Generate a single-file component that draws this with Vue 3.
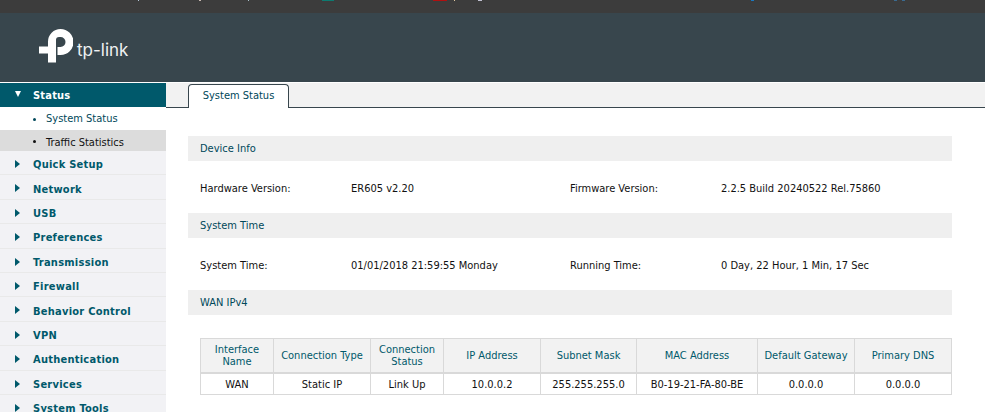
<script setup>
const subs = [
  { name: 'System Status', active: false },
  { name: 'Traffic Statistics', active: true }
]
const menus = ['Quick Setup', 'Network', 'USB', 'Preferences', 'Transmission', 'Firewall', 'Behavior Control', 'VPN', 'Authentication', 'Services', 'System Tools']
const heads = ['Interface Name', 'Connection Type', 'Connection Status', 'IP Address', 'Subnet Mask', 'MAC Address', 'Default Gateway', 'Primary DNS']
const cells = ['WAN', 'Static IP', 'Link Up', '10.0.0.2', '255.255.255.0', 'B0-19-21-FA-80-BE', '0.0.0.0', '0.0.0.0']
const widths = [73, 97, 73, 97, 96, 121, 97, 97]
const flecks = [
  { gap: 138, w: 1, c: '#b5c8d8' }, { gap: 60, w: 2, c: '#c8b8b0' }, { gap: 47, w: 1, c: '#a8c0c8' },
  { gap: 73, w: 12, c: '#0d7a70' }, { gap: 99, w: 14, c: '#b01010' }, { gap: 7, w: 1, c: '#e0c8a0' },
  { gap: 23, w: 4, c: '#c0c0d0' }, { gap: 269, w: 3, c: '#1a78c0' }, { gap: 140, w: 3, c: '#3a6a90' }, { gap: 5, w: 3, c: '#3a6a90' }
]
</script>

<template>
  <div class="page">
    <div class="topbar">
      <i v-for="(f, i) in flecks" :key="i" class="fleck" :style="{ marginLeft: f.gap + 'px', width: f.w + 'px', background: f.c }"></i>
    </div>
    <header class="header">
      <svg class="logo" width="34" height="34" viewBox="0 0 34 34">
        <path fill="#fff" d="M9 17.500V12.500A12.500 12.500 0 0 1 21.500 0A13 13 0 0 1 21.500 26H18.500V18H21.500A5 5 0 0 0 21.500 8H20A3 3 0 0 0 17 11V33.500H9V24.500H0V17.500z"/>
      </svg>
      <span class="brand">tp-link</span>
    </header>
    <div class="main">
      <aside class="side">
        <div class="status"><i class="down"></i>Status</div>
        <div v-for="s in subs" :key="s.name" class="sub" :class="{ on: s.active }"><i class="dot"></i>{{ s.name }}</div>
        <div v-for="m in menus" :key="m" class="menu"><i class="right"></i>{{ m }}</div>
      </aside>
      <main class="content">
        <div class="tabs"><div class="tab">System Status</div></div>
        <div class="body">
          <div class="bar">Device Info</div>
          <div class="info">
            <span>Hardware Version:</span><span>ER605 v2.20</span>
            <span>Firmware Version:</span><span>2.2.5 Build 20240522 Rel.75860</span>
          </div>
          <div class="bar">System Time</div>
          <div class="info">
            <span>System Time:</span><span>01/01/2018 21:59:55 Monday</span>
            <span>Running Time:</span><span>0 Day, 22 Hour, 1 Min, 17 Sec</span>
          </div>
          <div class="bar">WAN IPv4</div>
          <table class="tbl">
            <colgroup><col v-for="(w, i) in widths" :key="i" :style="{ width: w + 'px' }"></colgroup>
            <thead><tr><th v-for="h in heads" :key="h">{{ h }}</th></tr></thead>
            <tbody><tr><td v-for="(c, i) in cells" :key="i">{{ c }}</td></tr></tbody>
          </table>
        </div>
      </main>
    </div>
  </div>
</template>

<style scoped>
.page { width: 985px; height: 412px; overflow: hidden; background: #fff; font: 11px "DejaVu Sans Condensed", "DejaVu Sans", sans-serif; font-stretch: condensed; color: #111; }
.topbar { height: 13px; background: #3c3c3c; display: flex; align-items: flex-start; }
.fleck { flex: none; height: 1px; }
.header { height: 69px; background: #38464d; display: flex; align-items: flex-start; box-sizing: border-box; padding: 16px 0 0 39px; }
.logo { flex: none; }
.brand { font: 17px "Inter", "DejaVu Sans", sans-serif; color: #eef1f2; margin: 10px 0 0 4px; line-height: 22px; }
.main { display: flex; margin-top: 1px; }
.side { width: 166px; flex: none; background: #f2f2f5; }
.status { height: 24px; background: #00596b; color: #fff; font-weight: 700; letter-spacing: .2px; display: flex; align-items: center; padding-left: 33px; position: relative; }
.sub { height: 23px; display: flex; align-items: center; padding-left: 46px; background: #fff; color: #00485a; position: relative; box-sizing: border-box; }
.sub.on { height: 21px; padding-top: 3px; background: #dcdcdc; color: #111; }
.dot { position: absolute; left: 33px; top: 50%; width: 3px; height: 3px; margin-top: -1px; border-radius: 50%; background: currentColor; }
.menu { height: 24.4px; box-sizing: border-box; padding-top: 4px; border-bottom: 1px solid #e9e9e9; display: flex; align-items: center; padding-left: 33px; font-weight: 700; letter-spacing: .25px; color: #00596b; position: relative; }
.down, .right { position: absolute; width: 0; height: 0; }
.down { left: 15px; top: 8px; border-left: 3.5px solid transparent; border-right: 3.5px solid transparent; border-top: 6px solid #fff; }
.right { left: 15px; top: 9px; border-top: 4px solid transparent; border-bottom: 4px solid transparent; border-left: 5px solid #00596b; }
.content { flex: 1; min-width: 0; }
.tabs { height: 25px; box-sizing: border-box; background: #f2f2f2; border-bottom: 1px solid #38464d; padding: 1px 0 0 22px; }
.tab { width: 101px; height: 24px; box-sizing: border-box; background: #fff; border: 1px solid #38464d; border-bottom: 0; border-radius: 4px 4px 0 0; color: #00485a; text-align: center; line-height: 22px; }
.body { width: 764px; margin-left: 22px; padding-top: 28px; }
.bar { height: 25px; background: #efefef; color: #00485a; padding-left: 12px; line-height: 25px; }
.info { height: 52px; box-sizing: border-box; padding-top: 3px; display: grid; grid-template-columns: 151px 219px 151px 1fr; padding-left: 12px; align-items: center; }
.tbl { width: 752px; margin: 23px 0 0 12px; border-collapse: collapse; table-layout: fixed; text-align: center; }
.tbl th { height: 33px; padding: 0; background: #f2f2f2; border: 1px solid #d9d9d9; border-bottom-width: 2px; color: #00596b; font-weight: 400; line-height: 12px; }
.tbl td { height: 20px; padding: 0; border: 1px solid #d9d9d9; }
</style>
